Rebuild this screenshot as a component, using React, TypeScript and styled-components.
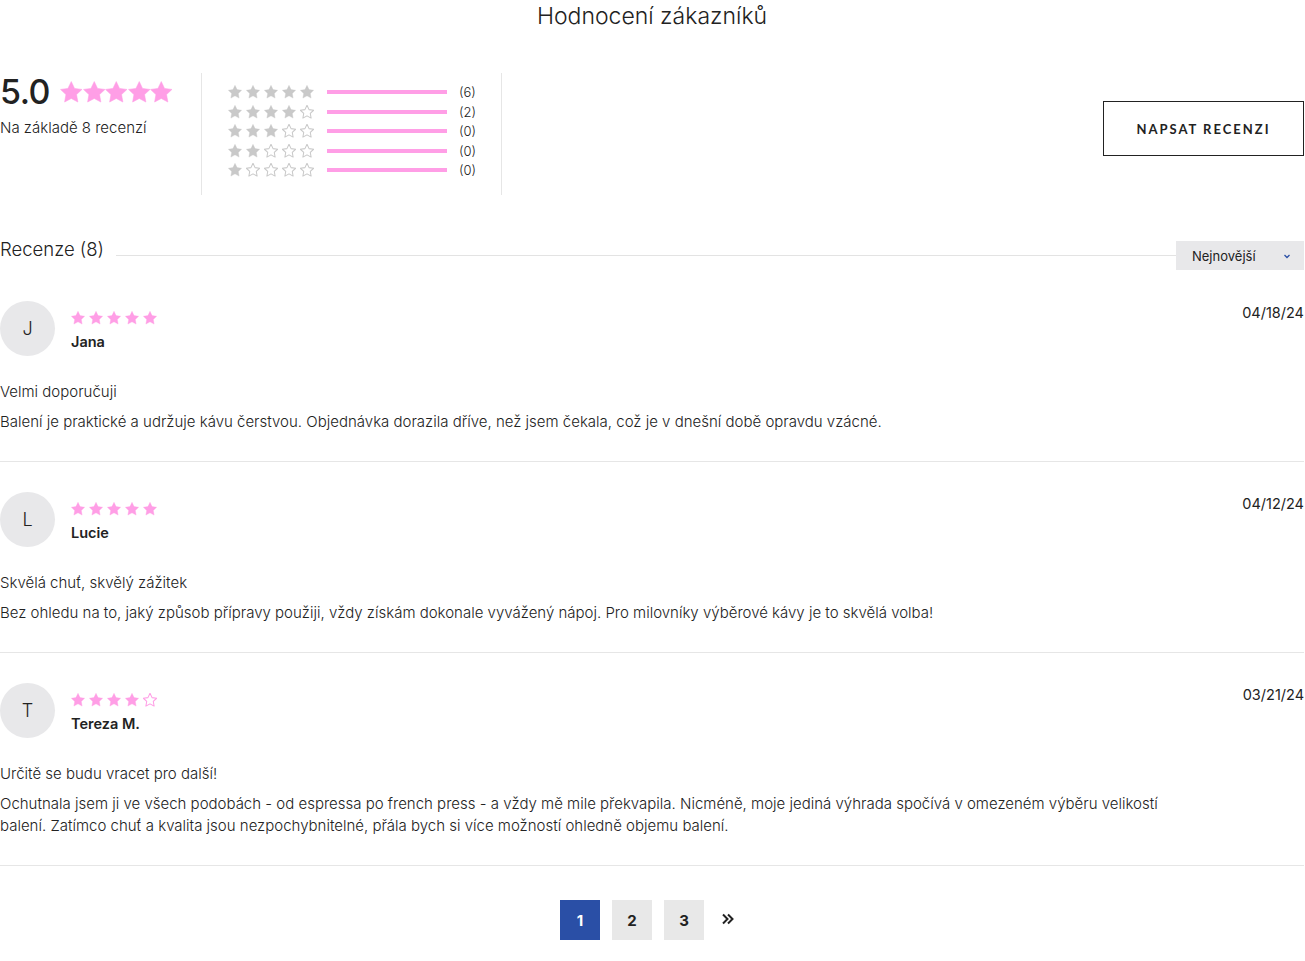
import React from "react";
import styled, { createGlobalStyle } from "styled-components";

const GlobalStyle = createGlobalStyle`
  html, body { margin: 0; padding: 0; background: #fff; }
  body { font-family: "Inter", "Lato", sans-serif; font-weight: 300; color: #222; }
  * { box-sizing: border-box; }
`;

const PINK = "#ff9ee6";
const GREY = "#c9c9c9";

const Page = styled.div`
  width: 1305px;
  padding: 0 1px 0 0;
`;

const Title = styled.h2`
  margin: 0;
  padding-top: 2px;
  text-align: center;
  font-size: 23px;
  font-weight: 300;
  line-height: 28px;
  color: #222;
`;

const Summary = styled.div`
  display: flex;
  align-items: stretch;
  margin-top: 43px;
  height: 122px;
`;

const Average = styled.div`
  width: 202px;
  border-right: 1px solid #e6e6e6;
`;

const AvgRow = styled.div`
  display: flex;
  align-items: center;
  gap: 10px;
`;

const AvgNumber = styled.span`
  font-size: 34px;
  font-weight: 500;
  line-height: 38px;
  letter-spacing: -0.5px;
  color: #222;
`;

const AvgCaption = styled.div`
  margin-top: 8px;
  font-size: 15px;
  line-height: 18px;
`;

const Distribution = styled.div`
  width: 300px;
  border-right: 1px solid #e6e6e6;
  padding: 10px 0 0 26px;
  display: flex;
  flex-direction: column;
  gap: 1px;
`;

const DistRow = styled.div`
  display: flex;
  align-items: center;
  height: 18.5px;
`;

const Bar = styled.div`
  width: 120px;
  height: 4px;
  background: ${PINK};
  margin: 0 12px 0 13px;
`;

const Count = styled.span`
  font-size: 13px;
  color: #222;
`;

const Spacer = styled.div`
  flex: 1;
`;

const WriteButton = styled.button`
  align-self: flex-start;
  margin-top: 28px;
  width: 201px;
  height: 55px;
  border: 1px solid #222;
  background: #fff;
  font-family: "Lato", sans-serif;
  font-size: 13px;
  font-weight: 700;
  letter-spacing: 2px;
  color: #222;
  cursor: pointer;
`;

const ListHeader = styled.div`
  display: flex;
  align-items: center;
  margin-top: 46px;
  margin-bottom: 1px;
  height: 29px;
`;

const ListTitle = styled.span`
  font-size: 18.5px;
  font-weight: 300;
  color: #222;
  padding-bottom: 14px;
`;

const HeaderLine = styled.div`
  flex: 1;
  height: 1px;
  background: #e3e3e3;
  margin-left: 12px;
  align-self: center;
`;

const Sort = styled.div`
  width: 128px;
  height: 29px;
  background: #e8e8ea;
  display: flex;
  align-items: center;
  justify-content: space-between;
  padding: 0 12px 0 16px;
  font-size: 13px;
  font-weight: 400;
  color: #222;
`;

const Review = styled.div`
  padding: 30px 0 28px;
  border-bottom: 1px solid #e6e6e6;
`;

const ReviewTop = styled.div`
  display: flex;
  align-items: flex-start;
`;

const Avatar = styled.div`
  width: 55px;
  height: 55px;
  border-radius: 50%;
  background: #e8e8ea;
  display: flex;
  align-items: center;
  justify-content: center;
  font-size: 18px;
  font-weight: 300;
  color: #222;
`;

const Meta = styled.div`
  margin-left: 16px;
  padding-top: 10px;
  flex: 1;
`;

const Name = styled.div`
  margin-top: 8px;
  font-size: 14.5px;
  font-weight: 600;
  color: #222;
`;

const DateText = styled.div`
  font-size: 14.5px;
  font-weight: 400;
  color: #222;
  padding-top: 3px;
`;

const ReviewTitle = styled.div`
  margin-top: 27px;
  font-size: 15px;
  line-height: 18px;
  color: #222;
`;

const ReviewBody = styled.p`
  margin: 10px 0 0;
  max-width: 1175px;
  font-size: 15px;
  line-height: 22px;
  color: #222;
`;

const Pager = styled.div`
  display: flex;
  justify-content: center;
  align-items: center;
  gap: 12px;
  margin-top: 34px;
  padding-bottom: 21px;
  padding-right: 8px;
`;

const PageBtn = styled.div<{ $active?: boolean }>`
  width: 40px;
  height: 40px;
  display: flex;
  align-items: center;
  justify-content: center;
  background: ${(p) => (p.$active ? "#2a4fa6" : "#e8e8e8")};
  color: ${(p) => (p.$active ? "#fff" : "#222")};
  font-size: 15px;
  font-weight: 700;
`;

const NextBtn = styled.div`
  width: 20px;
  height: 40px;
  display: flex;
  align-items: center;
  justify-content: center;
  padding: 0 0 3px 3px;
`;

const StarRow = styled.div<{ $gap: number }>`
  display: flex;
  gap: ${(p) => p.$gap}px;
`;

const STAR =
  "M12 2.5l2.94 6.1 6.56.9-4.8 4.6 1.18 6.6L12 17.5l-5.88 3.2 1.18-6.6-4.8-4.6 6.56-.9z";

function Star({ size, filled, color }: { size: number; filled: boolean; color: string }) {
  return (
    <svg width={size} height={size} viewBox="2 2 20 20">
      <path
        d={STAR}
        fill={filled ? color : "none"}
        stroke={color}
        strokeWidth={filled ? 0.5 : 1.5}
        strokeLinejoin="round"
      />
    </svg>
  );
}

function Stars({ n, size, gap, color }: { n: number; size: number; gap: number; color: string }) {
  return (
    <StarRow $gap={gap}>
      {[0, 1, 2, 3, 4].map((i) => (
        <Star key={i} size={size} filled={i < n} color={color} />
      ))}
    </StarRow>
  );
}

const dist = [
  { stars: 5, count: 6 },
  { stars: 4, count: 2 },
  { stars: 3, count: 0 },
  { stars: 2, count: 0 },
  { stars: 1, count: 0 },
];

const reviews = [
  {
    initial: "J",
    name: "Jana",
    stars: 5,
    date: "04/18/24",
    title: "Velmi doporučuji",
    body: "Balení je praktické a udržuje kávu čerstvou. Objednávka dorazila dříve, než jsem čekala, což je v dnešní době opravdu vzácné.",
  },
  {
    initial: "L",
    name: "Lucie",
    stars: 5,
    date: "04/12/24",
    title: "Skvělá chuť, skvělý zážitek",
    body: "Bez ohledu na to, jaký způsob přípravy použiji, vždy získám dokonale vyvážený nápoj. Pro milovníky výběrové kávy je to skvělá volba!",
  },
  {
    initial: "T",
    name: "Tereza M.",
    stars: 4,
    date: "03/21/24",
    title: "Určitě se budu vracet pro další!",
    body: "Ochutnala jsem ji ve všech podobách - od espressa po french press - a vždy mě mile překvapila. Nicméně, moje jediná výhrada spočívá v omezeném výběru velikostí balení. Zatímco chuť a kvalita jsou nezpochybnitelné, přála bych si více možností ohledně objemu balení.",
  },
];

export default function App() {
  return (
    <Page>
      <GlobalStyle />
      <Title>Hodnocení zákazníků</Title>
      <Summary>
        <Average>
          <AvgRow>
            <AvgNumber>5.0</AvgNumber>
            <Stars n={5} size={22.5} gap={0} color={PINK} />
          </AvgRow>
          <AvgCaption>Na základě 8 recenzí</AvgCaption>
        </Average>
        <Distribution>
          {dist.map((d) => (
            <DistRow key={d.stars}>
              <Stars n={d.stars} size={14} gap={4} color={GREY} />
              <Bar />
              <Count>({d.count})</Count>
            </DistRow>
          ))}
        </Distribution>
        <Spacer />
        <WriteButton>NAPSAT RECENZI</WriteButton>
      </Summary>
      <ListHeader>
        <ListTitle>Recenze (8)</ListTitle>
        <HeaderLine />
        <Sort>
          <span>Nejnovější</span>
          <svg width="10" height="10" viewBox="0 0 10 10">
            <path d="M2.5 4l2.5 2.5L7.5 4" fill="none" stroke="#2a4fa6" strokeWidth="1.3" />
          </svg>
        </Sort>
      </ListHeader>
      {reviews.map((r) => (
        <Review key={r.name}>
          <ReviewTop>
            <Avatar>{r.initial}</Avatar>
            <Meta>
              <Stars n={r.stars} size={14} gap={4} color={PINK} />
              <Name>{r.name}</Name>
            </Meta>
            <DateText>{r.date}</DateText>
          </ReviewTop>
          <ReviewTitle>{r.title}</ReviewTitle>
          <ReviewBody>{r.body}</ReviewBody>
        </Review>
      ))}
      <Pager>
        <PageBtn $active>1</PageBtn>
        <PageBtn>2</PageBtn>
        <PageBtn>3</PageBtn>
        <NextBtn>
          <svg width="14" height="12" viewBox="0 0 14 12">
            <path d="M2 1.5l4.5 4.5L2 10.5M7 1.5l4.5 4.5L7 10.5" fill="none" stroke="#222" strokeWidth="2" />
          </svg>
        </NextBtn>
      </Pager>
    </Page>
  );
}
